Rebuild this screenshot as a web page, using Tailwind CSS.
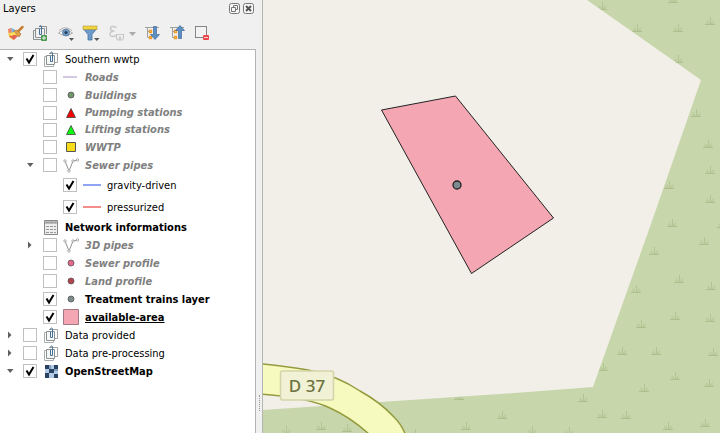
<!DOCTYPE html>
<html lang="en">
<head>
  <meta charset="UTF-8" />
  <meta name="viewport" content="width=device-width, initial-scale=1" />
  <title>Layers</title>
  <script src="https://cdn.jsdelivr.net/npm/@tailwindcss/browser@4"></script>
</head>
<body class="flex h-screen overflow-hidden bg-[#f0f0f0] font-['DejaVu_Sans_Condensed','DejaVu_Sans',sans-serif] text-[11px] leading-4 text-black">

  <!-- Shared icons -->
  <svg class="hidden">
    <symbol id="check" viewBox="0 0 14 14"><path d="M3.5 6.5L6 10.5L10.5 3" fill="none" stroke="#000" stroke-width="2" /></symbol>
    <symbol id="group" viewBox="0 0 16 16">
      <path d="M3 5.500H1.500V15.500H10.500V14" fill="none" stroke="#a8acac" />
      <path d="M3.500 4.500h8v9h-8z" fill="#f6f7f7" stroke="#8b9090" />
      <path d="M6 2.500h8.500v9H12" fill="none" stroke="#a0a4a4" />
      <path d="M7.500 5V10.500H9.500V2.500Q9.500 1 8.500 1Q7.500 1 7.500 2.500" fill="none" stroke="#416f95" />
    </symbol>
    <symbol id="line-layer" viewBox="0 0 16 16">
      <path d="M2 4L6 14L10 4L14.500 3" fill="none" stroke="#929292" />
      <g fill="#fff" stroke="#999" stroke-width=".8"><circle cx="2" cy="4" r="1.200" /><circle cx="6" cy="14" r="1.200" /><circle cx="10" cy="4" r="1.200" /><circle cx="14.500" cy="3" r="1.200" /></g>
    </symbol>
    <symbol id="open" viewBox="0 0 8 8"><path d="M1 2h6.500L4.200 6z" fill="#606060" /></symbol>
    <symbol id="closed" viewBox="0 0 8 8"><path d="M2 0.500v7L5.500 4z" fill="#606060" /></symbol>
    <symbol id="grass" viewBox="0 0 12 10">
      <path d="M1 8.500H11" stroke="#aebf8d" fill="none" />
      <path d="M6.500 8V1" stroke="#b3c392" fill="none" />
      <path d="M5.500 8L3 4.500M7 8L9.500 4.500M4.500 8L2 6M8 8L10.500 6" stroke="#b7c797" fill="none" />
    </symbol>
  </svg>

  <aside class="flex w-[263px] shrink-0 flex-col border-r border-[#b4b4b4]">
    <header class="flex h-[17px] shrink-0 items-center gap-[3px] pl-[3px] pr-2">
      <h1 class="grow">Layers</h1>
      <button aria-label="Float panel">
        <svg class="size-[11px]" viewBox="0 0 11 11" fill="none" stroke="#777"><rect x=".5" y=".5" width="10" height="10" rx="2" fill="#f7f7f7" /><path d="M4.500 4V2.500h4v4H7M2.500 4.500h4v4h-4z" /></svg>
      </button>
      <button aria-label="Close panel">
        <svg class="size-[11px]" viewBox="0 0 11 11" fill="none" stroke="#777"><rect x=".5" y=".5" width="10" height="10" rx="2" fill="#f7f7f7" /><path d="M3 3l5 5M8 3l-5 5" stroke="#555" stroke-width="2" /></svg>
      </button>
    </header>

    <div role="toolbar" aria-label="Layer tools" class="flex h-8 shrink-0 items-center gap-[5px] pl-[5px]">
      <button aria-label="Layer styling">
        <svg class="size-5" viewBox="0 0 20 20">
          <path d="M3 7l8 1 2 4-5 5-4-3z" fill="#f5d33b" /><path d="M6 5l3 1 2 3-4 1z" fill="#79b2df" /><path d="M3 6l3-1 1 5-3 1z" fill="#ee8570" /><path d="M4 13l4-2 5 2-4 4z" fill="#e66155" /><path d="M4 10l6-1 2 2-6 2z" fill="#ffe05a" />
          <path d="M9 8l5 6 2-3-4-4z" fill="#dfa24d" stroke="#a36b29" stroke-width=".6" /><path d="M13.500 8l4-4" stroke="#c58033" stroke-width="2.500" stroke-linecap="round" />
        </svg>
      </button>
      <button aria-label="Add group">
        <svg class="size-5" viewBox="0 0 20 20">
          <path d="M5 7.500H3.500V16.500H12M5.500 5.500H14.500V14.500H5.500zM9 3.500H16.500V11" fill="none" stroke="#8b9090" />
          <path d="M9.500 6V11.500H11.500V4Q11.500 2.500 10.500 2.500Q9.500 2.500 9.500 4" fill="none" stroke="#416f95" />
          <rect x="11" y="12" width="6" height="6" rx="1" fill="#4f9a53" /><path d="M14 13v4M12 15h4" stroke="#e5f2e5" />
        </svg>
      </button>
      <button aria-label="Manage map themes" class="pl-px">
        <svg class="size-5" viewBox="0 0 20 20">
          <path d="M2.500 10Q9 4 16.500 10Q10 15 2.500 10z" fill="#fff" stroke="#aaa" /><path d="M3 7.500Q9 2 16 7.500" fill="none" stroke="#b4b4b4" />
          <circle cx="10" cy="9.500" r="3.500" fill="#719bc5" stroke="#55799e" stroke-width=".8" /><circle cx="10" cy="9.500" r="1.500" fill="#243a55" /><path d="M13 15h5l-2.500 3z" fill="#555" />
        </svg>
      </button>
      <button aria-label="Filter legend">
        <svg class="size-5" viewBox="0 0 20 20">
          <path d="M2.500 6h13l-4.500 5.500V17H7V11.500z" fill="#6d9acb" stroke="#48749f" stroke-width=".8" /><rect x="2" y="3" width="14" height="3.500" fill="#f3d53b" stroke="#a99a45" stroke-width=".6" /><path d="M13 15h5.500L15.800 18z" fill="#555" />
        </svg>
      </button>
      <button aria-label="Filter by expression" class="flex items-center gap-px pl-px" disabled>
        <svg class="size-5" viewBox="0 0 20 20" fill="none" stroke="#c9c9c9" stroke-width="1.500">
          <path d="M9.500 4.500Q3.500 2 3.500 5.500Q3.500 8 7.500 8Q3 8 3 11.500Q3.500 15 9 12.500" /><path d="M9.500 11.500h7v3.500l-1 2h-2v-3h-1v3h-2l-1-2z" stroke-width="1.200" />
        </svg>
        <svg class="h-5 w-[9px]" viewBox="0 0 9 20"><path d="M1 9h7l-3.500 4z" fill="#aaa" /></svg>
      </button>
      <button aria-label="Expand all">
        <svg class="size-5" viewBox="0 0 20 20">
          <path d="M3 4.500H17M5.500 5V14.500H8M5.500 8.500H8" fill="none" stroke="#a0a0a0" /><path d="M7.500 7.500h2v2h-2zM7.500 13.500h2v2h-2z" fill="#fff" stroke="#f39a25" stroke-width="1.300" />
          <path d="M11.500 3.500h3v8H17.500L13 16.500L8.500 11.500H11.500z" fill="#5d8fc2" stroke="#3e6c9c" stroke-width=".7" />
        </svg>
      </button>
      <button aria-label="Collapse all">
        <svg class="size-5" viewBox="0 0 20 20">
          <path d="M3 4.500H17M5.500 5V14.500H8M5.500 8.500H8" fill="none" stroke="#a0a0a0" /><path d="M7.500 7.500h2v2h-2zM7.500 13.500h2v2h-2z" fill="#fff" stroke="#f39a25" stroke-width="1.300" />
          <path d="M11.500 15.500V7.500H8.500L13 2.500L17.500 7.500H14.500V15.500z" fill="#5d8fc2" stroke="#3e6c9c" stroke-width=".7" />
        </svg>
      </button>
      <button aria-label="Remove layer">
        <svg class="size-5" viewBox="0 0 20 20"><rect x="3.500" y="3.500" width="11" height="11" fill="#f3f3f3" stroke="#858585" /><rect x="11" y="12" width="6" height="5" rx="1" fill="#e9474b" /><path d="M12 14.500h4" stroke="#fbd5d5" /></svg>
      </button>
    </div>

    <div class="mr-[6px] grow border-r border-t border-[#b4b4b4] bg-white">
      <ul id="tree"></ul>
    </div>
  </aside>

  <main class="relative min-w-0 grow">
    <!-- splitter grip -->
    <div class="absolute -left-[4px] top-[395px] h-4 border-l border-dotted border-[#999]"></div>
    <svg class="block size-full" viewBox="263 0 457 433" preserveAspectRatio="xMinYMin slice" role="img" aria-label="Map">
      <rect x="263" width="457" height="433" fill="#c8d7ab" />
      <g id="grass-marks"></g>
      <path d="M263 0H587L701 80L652 221L593 387L500 394L380 402L263 410z" fill="#f2efe9" />
      <path d="M258 363.500Q285 366 308 370Q338 376 360 391Q380 402 394 417Q402 425 406 436H371Q352 418 330 408Q306 397 258 394z" fill="#f7fabf" stroke="#939b3c" stroke-width="1.500" />
      <rect x="280.500" y="371" width="53" height="29" rx="2" fill="#f0f1d5" stroke="#d3d4a9" stroke-width="1.500" />
      <text x="307" y="392" text-anchor="middle" font-family="Noto Sans, sans-serif" font-size="17" font-weight="500" fill="#6d7340">D 37</text>
      <path d="M381.500 110L455.500 96L553.500 218L471.500 273.500z" fill="#f4a6b2" stroke="#232323" />
      <circle cx="457" cy="185" r="4" fill="#7d8b8f" stroke="#232323" stroke-width="1.300" />
    </svg>
  </main>

  <script>
    const muted = 'font-bold italic text-[#808080]';
    const box = (inner) => `<svg class="h-4 w-4 shrink-0" viewBox="0 0 16 16">${inner}</svg>`;
    const use = (id) => box(`<use href="#${id}" />`);
    const dot = (color) => box(`<circle cx="8" cy="8" r="3" fill="${color}" stroke="#555" stroke-width=".8" />`);
    const triangle = (color) => box(`<path d="M8 3.500L12.500 12.500H3.500z" fill="${color}" stroke="#444" stroke-width=".8" />`);
    const line = (color) => `<svg class="h-4 w-[18px] shrink-0" viewBox="0 0 18 16"><path d="M0 8H18" stroke="${color}" stroke-width="2" /></svg>`;
    const table = box('<path d="M1.500 1.500h13v14h-13z" fill="#eee" stroke="#888" /><path d="M2 2h12v3H2z" fill="#bbb" /><path d="M3 3.500h3M7 3.500h3M11 3.500h2M3 7.500h3M7 7.500h3M11 7.500h2M3 10.500h3M7 10.500h3M11 10.500h2M3 13.500h3M7 13.500h3M11 13.500h2" stroke="#999" />');
    const raster = box('<path d="M2 2h13v13H2z" fill="#b4cbe6" /><path d="M2 2h4v4H2zM11 2h4v4h-4zM6 6h5v4H6zM2 10h4v5H2zM11 11h4v4h-4z" fill="#294163" /><path d="M6 2h2v4H6zM11 6h4v2h-4z" fill="#7e9cc0" />');

    // level, arrow, checked (null = no box), icon, name, text style, row height
    const rows = [
      [0, 'open', true, use('group'), 'Southern wwtp', '', 'h-[18px]'],
      [1, '', false, box('<path d="M0 8H14" stroke="#d3c9e3" stroke-width="2" />'), 'Roads', muted, 'h-[18px]'],
      [1, '', false, dot('#6f9668'), 'Buildings', muted, 'h-[18px]'],
      [1, '', false, triangle('#f80000'), 'Pumping stations', muted, 'h-[17px]'],
      [1, '', false, triangle('#0cf80c'), 'Lifting stations', muted, 'h-[17px]'],
      [1, '', false, box('<path d="M3.500 3.500h9v9h-9z" fill="#f8db19" stroke="#555" />'), 'WWTP', muted, 'h-[18px]'],
      [1, 'open', false, use('line-layer'), 'Sewer pipes', muted, 'h-[18px]'],
      [2, '', true, line('#8fa4f5'), 'gravity-driven', '', 'h-[22px]'],
      [2, '', true, line('#f58d8b'), 'pressurized', '', 'h-[22px]'],
      [1, '', null, table, 'Network informations', 'font-bold', 'h-[18px]'],
      [1, 'closed', false, use('line-layer'), '3D pipes', muted, 'h-[18px]'],
      [1, '', false, dot('#e7668a'), 'Sewer profile', muted, 'h-[18px]'],
      [1, '', false, dot('#b5434b'), 'Land profile', muted, 'h-[18px]'],
      [1, '', true, dot('#7d8b8f'), 'Treatment trains layer', 'font-bold', 'h-[18px]'],
      [1, '', true, box('<path d="M.5 .5h15v15H.5z" fill="#f4a6b2" stroke="#a47880" />'), 'available-area', 'font-bold underline', 'h-[18px]'],
      [0, 'closed', false, use('group'), 'Data provided', '', 'h-[18px]'],
      [0, 'closed', false, use('group'), 'Data pre-processing', '', 'h-[18px]'],
      [0, 'open', true, raster, 'OpenStreetMap', 'font-bold', 'h-[18px]'],
    ];
    const indent = ['pl-[6px]', 'pl-[26px]', 'pl-[46px]'];

    document.getElementById('tree').innerHTML = rows.map(([level, arrow, checked, icon, name, style, height], i) => `
      <li class="flex items-center whitespace-nowrap ${indent[level]} ${height}">
        <button class="mr-[9px] size-2 shrink-0" ${arrow ? `aria-label="Toggle ${name}"` : 'tabindex="-1" aria-hidden="true"'}>
          ${arrow ? `<svg class="size-2"><use href="#${arrow}" /></svg>` : ''}
        </button>
        ${checked === null ? '' : `
        <span class="relative mr-[6px] size-[14px] shrink-0">
          <input type="checkbox" id="layer${i}" class="peer block size-[14px] appearance-none border border-[#c0c0c0] bg-white" ${checked ? 'checked' : ''} />
          <svg class="pointer-events-none absolute inset-0 hidden size-[14px] peer-checked:block"><use href="#check" /></svg>
        </span>`}
        <label class="flex items-center gap-[6px] ${style}" ${checked === null ? '' : `for="layer${i}"`}>${icon}<span class="pt-px">${name}</span></label>
      </li>`).join('');

    const marks = [
      [673, 3], [602, 10], [637, 32], [710, 25], [678, 32], [678, 63], [696, 117], [708, 148], [710, 174],
      [669, 189], [710, 203], [672, 227], [722, 228], [704, 245], [654, 255], [679, 283], [636, 293], [711, 290],
      [675, 320], [710, 322], [641, 328], [622, 355], [656, 355], [713, 356], [603, 371], [675, 380], [709, 387],
      [644, 392], [583, 402], [602, 418], [626, 419], [502, 419], [532, 434], [569, 435], [668, 430], [705, 427],
      [459, 400], [466, 430], [415, 437], [286, 434], [321, 430], [347, 432],
    ];
    document.getElementById('grass-marks').innerHTML = marks.map(([x, y]) =>
      `<use href="#grass" x="${x - 6}" y="${y - 9}" width="12" height="10" />`).join('');
  </script>
</body>
</html>
